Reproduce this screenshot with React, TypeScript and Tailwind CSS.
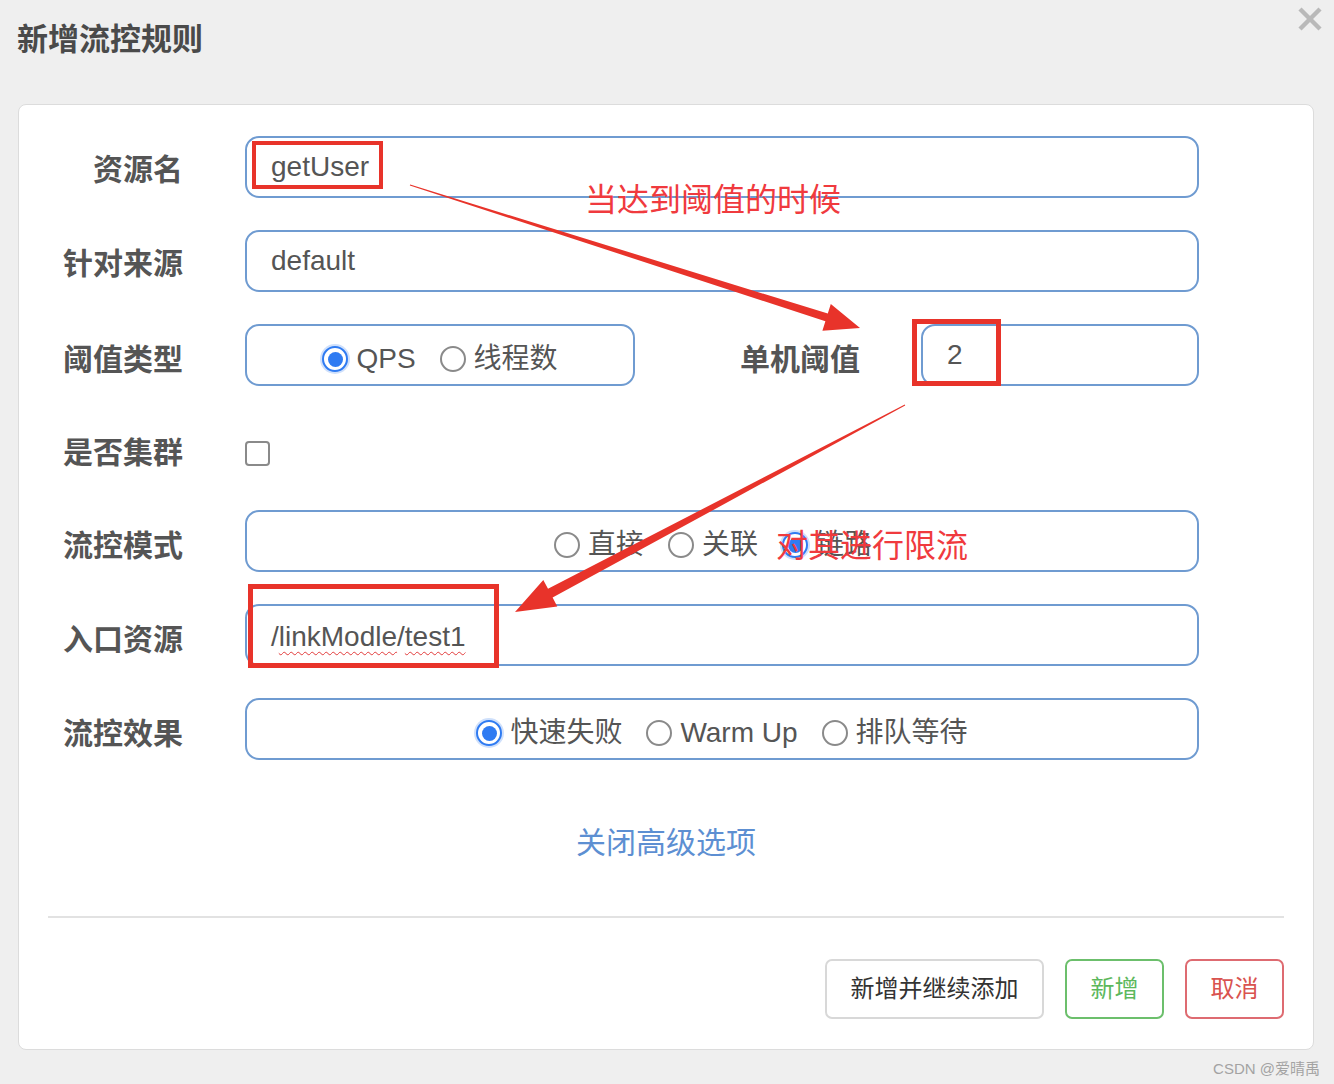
import React from "react";

const FONT = { fontFamily: '"Liberation Sans", "Noto Sans CJK SC", sans-serif' };

function Radio({ checked, label }: { checked?: boolean; label: string }) {
  return (
    <div className="flex items-center">
      {checked ? (
        <span className="flex h-[26px] w-[26px] items-center justify-center rounded-full border-2 border-[#2f7bf2] bg-white shadow-[0_0_0_2px_#cfe0fb]">
          <span className="h-[15px] w-[15px] rounded-full bg-[#2f7bf2]" />
        </span>
      ) : (
        <span className="h-[26px] w-[26px] rounded-full border-2 border-[#8a8a8a] bg-white" />
      )}
      <span className="ml-[8px] text-[28px] leading-[34px] text-[#555]">{label}</span>
    </div>
  );
}

function Label({ children, className = "" }: { children: React.ReactNode; className?: string }) {
  return (
    <div className={`w-[164px] shrink-0 pt-[6px] text-right text-[30px] font-bold leading-[36px] text-[#555] ${className}`}>
      {children}
    </div>
  );
}

const box = "h-[62px] rounded-[14px] border-2 border-[#6f9bd1] bg-white";

export default function App() {
  return (
    <div className="relative h-[1084px] w-[1334px] overflow-hidden bg-[#efefef]" style={FONT}>
      {/* header */}
      <div className="flex h-[104px] items-start justify-between">
        <div className="pl-[17px] pt-[22px] text-[31px] font-bold leading-[36px] text-[#4a4a4a]">新增流控规则</div>
        <svg width="26" height="26" viewBox="0 0 26 26" className="mr-[11px] mt-[6px]">
          <line x1="3" y1="3" x2="23" y2="23" stroke="#b9b9b9" strokeWidth="4.5" />
          <line x1="23" y1="3" x2="3" y2="23" stroke="#b9b9b9" strokeWidth="4.5" />
        </svg>
      </div>

      {/* card */}
      <div className="ml-[18px] flex h-[946px] w-[1296px] flex-col rounded-[8px] border border-[#dcdcdc] bg-white pt-[31px]">
        {/* 资源名 */}
        <div className="flex items-center">
          <Label>资源名</Label>
          <div className={`ml-[62px] flex w-[954px] items-center pl-[24px] ${box}`}>
            <span className="text-[28px] leading-[34px] text-[#555]">getUser</span>
          </div>
        </div>
        {/* 针对来源 */}
        <div className="mt-[32px] flex items-center">
          <Label>针对来源</Label>
          <div className={`ml-[62px] flex w-[954px] items-center pl-[24px] ${box}`}>
            <span className="text-[28px] leading-[34px] text-[#555]">default</span>
          </div>
        </div>
        {/* 阈值类型 */}
        <div className="mt-[32px] flex items-center">
          <Label className="pt-[10px]">阈值类型</Label>
          <div className={`ml-[62px] flex w-[390px] items-center justify-center gap-[24px] pt-[8px] ${box}`}>
            <Radio checked label="QPS" />
            <Radio label="线程数" />
          </div>
          <div className="w-[225px] pt-[10px] text-right text-[30px] font-bold leading-[36px] text-[#555]">单机阈值</div>
          <div className={`ml-[61px] flex w-[278px] items-center pl-[24px] ${box}`}>
            <span className="text-[28px] leading-[34px] text-[#555]">2</span>
          </div>
        </div>
        {/* 是否集群 */}
        <div className="mt-[36px] flex h-[56px] items-center">
          <Label>是否集群</Label>
          <span className="ml-[62px] mt-[6px] h-[25px] w-[25px] rounded-[4px] border-2 border-[#8a8a8a] bg-white" />
        </div>
        {/* 流控模式 */}
        <div className="mt-[32px] flex items-center">
          <Label className="pt-[10px]">流控模式</Label>
          <div className={`ml-[62px] flex w-[954px] items-center justify-center gap-[24px] pr-[18px] pt-[8px] ${box}`}>
            <Radio label="直接" />
            <Radio label="关联" />
            <Radio checked label="链路" />
          </div>
        </div>
        {/* 入口资源 */}
        <div className="mt-[32px] flex items-center">
          <Label className="pt-[10px]">入口资源</Label>
          <div className={`ml-[62px] flex w-[954px] items-center pl-[24px] pt-[4px] ${box}`}>
            <span className="text-[28px] leading-[34px] text-[#555]">
              /
              <span className="underline decoration-[#e23b3b] decoration-wavy decoration-1 underline-offset-[5px]">linkModle</span>
              /
              <span className="underline decoration-[#e23b3b] decoration-wavy decoration-1 underline-offset-[5px]">test1</span>
            </span>
          </div>
        </div>
        {/* 流控效果 */}
        <div className="mt-[32px] flex items-center">
          <Label className="pt-[10px]">流控效果</Label>
          <div className={`ml-[62px] flex w-[954px] items-center justify-center gap-[24px] pt-[8px] ${box}`}>
            <Radio checked label="快速失败" />
            <Radio label="Warm Up" />
            <Radio label="排队等待" />
          </div>
        </div>

        <div className="mt-[65px] text-center text-[30px] leading-[36px] text-[#5d8fd2]">关闭高级选项</div>

        {/* footer */}
        <div className="mt-auto px-[29px] pb-[30px]">
          <div className="border-t-2 border-[#e2e2e2]" />
          <div className="mt-[41px] flex justify-end gap-[21px]">
            <button className="h-[60px] w-[219px] rounded-[7px] border-2 border-[#d8d8d8] bg-white text-[24px] text-[#333]">
              新增并继续添加
            </button>
            <button className="h-[60px] w-[99px] rounded-[7px] border-2 border-[#6cbf6c] bg-white text-[24px] text-[#5cb85c]">
              新增
            </button>
            <button className="h-[60px] w-[99px] rounded-[7px] border-2 border-[#de6b71] bg-white text-[24px] text-[#d9534f]">
              取消
            </button>
          </div>
        </div>
      </div>

      {/* watermark */}
      <div className="absolute bottom-[6px] right-[14px] text-[15px] leading-[18px] text-[#a3a3a3]">CSDN @爱晴禹</div>

      {/* annotations */}
      <div className="pointer-events-none absolute inset-0">
        <svg width="1334" height="1084" className="absolute left-0 top-0">
          <polygon
            points="410.15,184.52 827.8,313.6 830.8,304.1 860,328 822.4,330.7 825.4,321.2 409.85,185.48"
            fill="#e8332a"
          />
          <polygon
            points="904.8,404.6 548,588.8 543.3,580 515,612 557.3,606.4 552.6,597.6 905.2,405.4"
            fill="#e8332a"
          />
        </svg>
        <div className="absolute left-[252px] top-[141px] h-[48px] w-[131px] border-[4px] border-[#e8332a]" />
        <div className="absolute left-[912px] top-[319px] h-[67px] w-[89px] border-[5px] border-[#e8332a]" />
        <div className="absolute left-[248px] top-[584px] h-[84px] w-[251px] border-[5px] border-[#e8332a]" />
        <div className="absolute left-[585px] top-[181px] whitespace-nowrap text-[32px] leading-[38px] text-[#f03a3e]">
          当达到阈值的时候
        </div>
        <div className="absolute left-[776px] top-[527px] whitespace-nowrap text-[32px] leading-[38px] text-[#f03a3e]">
          对其进行限流
        </div>
      </div>
    </div>
  );
}
